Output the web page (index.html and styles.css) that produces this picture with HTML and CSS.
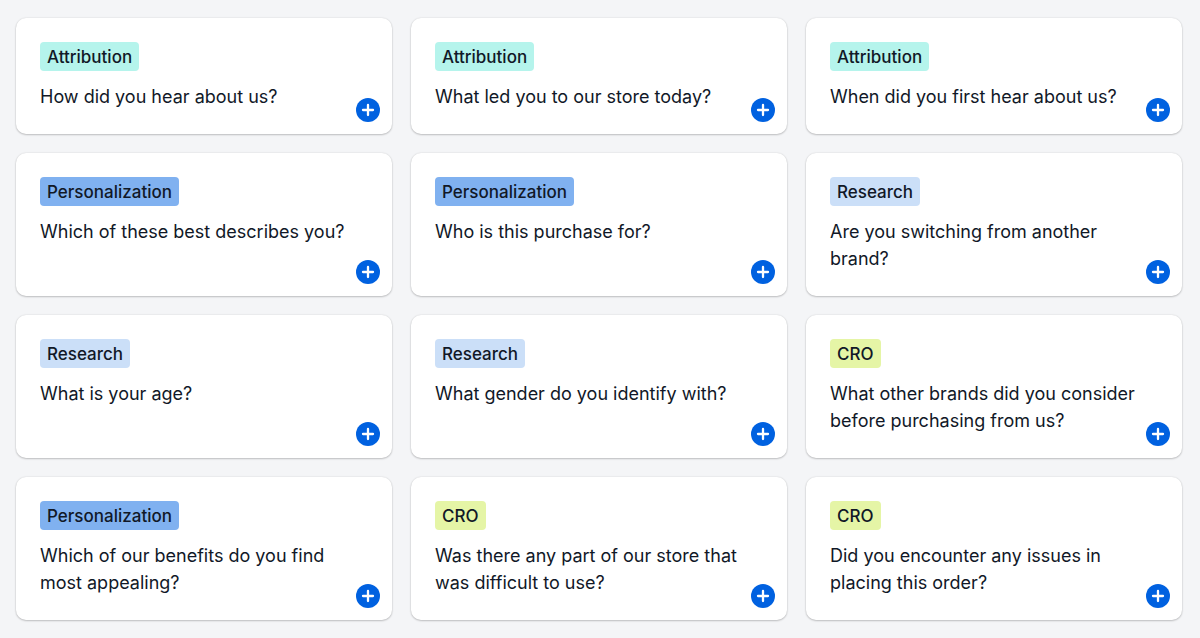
FILE: index.html
```html
<!DOCTYPE html>
<html lang="en">
<head>
<meta charset="utf-8">
<meta name="viewport" content="width=device-width, initial-scale=1">
<title>Question library</title>
<link rel="stylesheet" href="styles.css">
</head>
<body>
<svg class="sprite" aria-hidden="true"><symbol id="plus" viewBox="0 0 24 24"><circle cx="12" cy="12" r="12" fill="#0061e0"/><path d="M12 7v10M7 12h10" stroke="#fff" stroke-width="2.3" stroke-linecap="round"/></symbol></svg>
<main class="grid">
<article class="card"><span class="tag attribution">Attribution</span><p class="question">How did you hear about us?</p><button class="add" type="button" aria-label="Add question"><svg class="icon"><use href="#plus"/></svg></button></article>
<article class="card"><span class="tag attribution">Attribution</span><p class="question">What led you to our store today?</p><button class="add" type="button" aria-label="Add question"><svg class="icon"><use href="#plus"/></svg></button></article>
<article class="card"><span class="tag attribution">Attribution</span><p class="question">When did you first hear about us?</p><button class="add" type="button" aria-label="Add question"><svg class="icon"><use href="#plus"/></svg></button></article>
<article class="card"><span class="tag personalization">Personalization</span><p class="question">Which of these best describes you?</p><button class="add" type="button" aria-label="Add question"><svg class="icon"><use href="#plus"/></svg></button></article>
<article class="card"><span class="tag personalization">Personalization</span><p class="question">Who is this purchase for?</p><button class="add" type="button" aria-label="Add question"><svg class="icon"><use href="#plus"/></svg></button></article>
<article class="card"><span class="tag research">Research</span><p class="question">Are you switching from another brand?</p><button class="add" type="button" aria-label="Add question"><svg class="icon"><use href="#plus"/></svg></button></article>
<article class="card"><span class="tag research">Research</span><p class="question">What is your age?</p><button class="add" type="button" aria-label="Add question"><svg class="icon"><use href="#plus"/></svg></button></article>
<article class="card"><span class="tag research">Research</span><p class="question">What gender do you identify with?</p><button class="add" type="button" aria-label="Add question"><svg class="icon"><use href="#plus"/></svg></button></article>
<article class="card"><span class="tag cro">CRO</span><p class="question">What other brands did you consider before purchasing from us?</p><button class="add" type="button" aria-label="Add question"><svg class="icon"><use href="#plus"/></svg></button></article>
<article class="card"><span class="tag personalization">Personalization</span><p class="question">Which of our benefits do you find most appealing?</p><button class="add" type="button" aria-label="Add question"><svg class="icon"><use href="#plus"/></svg></button></article>
<article class="card"><span class="tag cro">CRO</span><p class="question">Was there any part of our store that was difficult to use?</p><button class="add" type="button" aria-label="Add question"><svg class="icon"><use href="#plus"/></svg></button></article>
<article class="card"><span class="tag cro">CRO</span><p class="question">Did you encounter any issues in placing this order?</p><button class="add" type="button" aria-label="Add question"><svg class="icon"><use href="#plus"/></svg></button></article>
</main>
</body>
</html>
```
FILE: styles.css
```css
* { box-sizing: border-box; }
body {
  margin: 0;
  background: #f4f5f7;
  color: #111827;
  font-family: Inter, "Liberation Sans", sans-serif;
}
.sprite { position: absolute; width: 0; height: 0; }
.grid {
  display: grid;
  grid-template-columns: repeat(3, minmax(0, 1fr));
  gap: 19px;
  padding: 18px 18px 17px 16px;
}
.card {
  position: relative;
  padding: 24px;
  border-radius: 10px;
  background: #fff;
  box-shadow: 0 0 2px rgba(0, 0, 0, 0.12), 0 1px 2px rgba(0, 0, 0, 0.2);
}
.tag {
  display: block;
  width: fit-content;
  padding: 1px 7px 0;
  border-radius: 4px;
  font-size: 17px;
  font-weight: 500;
  line-height: 28px;
}
.attribution { background: #b5f4ec; }
.personalization { background: #80b1f0; }
.research { background: #cbdff8; }
.cro { background: #e5f5a6; }
.question {
  margin: 12px 0 0;
  font-size: 18px;
  line-height: 27px;
}
.add {
  position: absolute;
  right: 12px;
  bottom: 12px;
  width: 24px;
  height: 24px;
  padding: 0;
  border: 0;
  border-radius: 50%;
  background: none;
  cursor: pointer;
}
.icon { display: block; width: 24px; height: 24px; }
```
